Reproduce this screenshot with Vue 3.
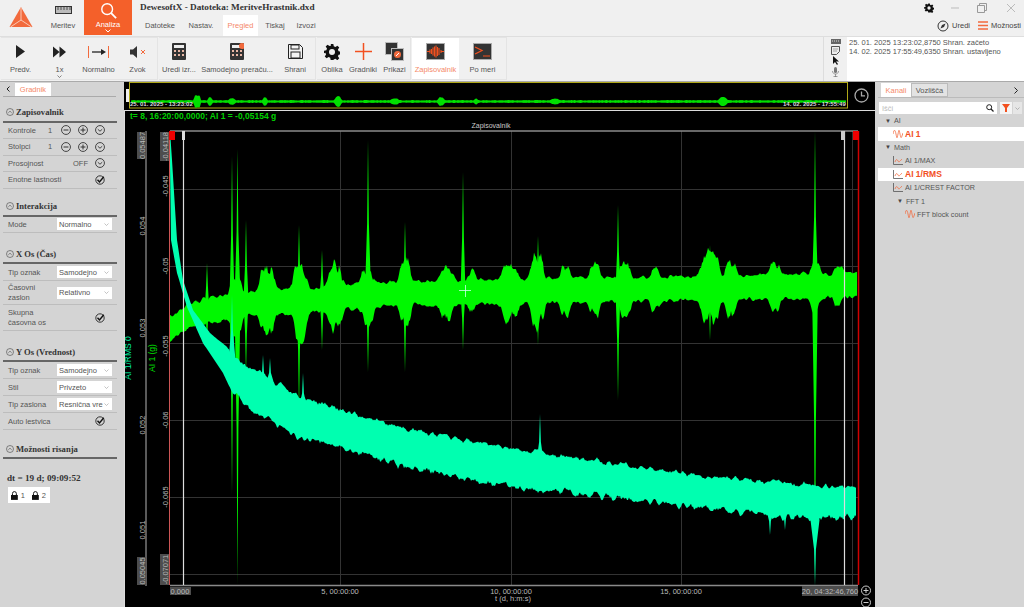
<template>
  <div class="app">
    <header class="top">
      <div class="logo">
        <svg width="24" height="22" viewBox="0 0 24 22">
          <path d="M12 0 L23.500 20 L.5 20 Z" fill="#f26a3d" />
          <path d="M12 1 L12 13 M1.500 20 L12 13 L22.500 20" stroke="#fbc9b5" stroke-width="1" fill="none" />
        </svg>
      </div>
      <div class="mode">
        <svg width="17" height="8" viewBox="0 0 17 8" class="mode-icon"><rect x=".5" y=".5" width="16" height="7" fill="#bbb" stroke="#333" /><path d="M3 1v3M6 1v3M9 1v3M12 1v3M15 1v3" stroke="#333" stroke-width=".8" /></svg>
        <span>Meritev</span>
      </div>
      <div class="mode active">
        <svg width="17" height="17" viewBox="0 0 19 19"><circle cx="8" cy="8" r="6" fill="none" stroke="#fff" stroke-width="1.600" /><path d="M12.500 12.500 L18 18" stroke="#fff" stroke-width="2" /></svg>
        <span>Analiza</span>
        <svg width="6" height="4" viewBox="0 0 6 4" class="caret"><path d="M.5 .5 L3 3 L5.500 .5" fill="none" stroke="#fff" /></svg>
      </div>
      <div class="title-wrap">
        <div class="title">DewesoftX - Datoteka: MeritveHrastnik.dxd</div>
        <nav class="tabs">
          <span class="tab" style="width:38px">Datoteke</span>
          <span class="tab" style="width:40px">Nastav.</span>
          <span class="tab sel" style="width:35px">Pregled</span>
          <span class="tab" style="width:30px">Tiskaj</span>
          <span class="tab" style="width:28px">Izvozi</span>
        </nav>
      </div>
      <div class="win">
        <div class="win-row">
          <svg width="10" height="10" viewBox="0 0 24 24" class="gear"><path fill="#111" d="M10 1h4l.6 3.200 2.200.9 2.700-1.800 2.800 2.800-1.800 2.700.9 2.200 3.200.6v4l-3.200.6-.9 2.200 1.800 2.700-2.800 2.800-2.700-1.800-2.200.9L14 23h-4l-.6-3.200-2.200-.9-2.700 1.800-2.800-2.800 1.800-2.700-.9-2.200L0 14v-4l3.200-.6.9-2.200-1.800-2.700 2.800-2.800 2.700 1.800 2.200-.9z" /><circle cx="12" cy="12" r="4" fill="#f0f0f0" /></svg>
          <svg width="10" height="10" viewBox="0 0 10 10" class="w-min"><path d="M1 5h8" stroke="#bbb" /></svg>
          <svg width="10" height="10" viewBox="0 0 10 10" class="w-max"><path d="M.5 2.500h7v7h-7z M2.500 2.500v-2h7v7h-2" fill="none" stroke="#999" /></svg>
          <svg width="10" height="10" viewBox="0 0 10 10" class="w-close"><path d="M1 1l8 8M9 1l-8 8" stroke="#bbb" /></svg>
        </div>
        <div class="win-row links">
          <svg width="12" height="12" viewBox="0 0 12 12"><circle cx="6" cy="6" r="5" fill="none" stroke="#333" /><path d="M8.500 3.500 L5 5 L3.500 8.500 L7 7 Z" fill="#333" /></svg>
          <span class="lnk">Uredi</span>
          <svg width="10" height="9" viewBox="0 0 10 9" class="burger"><path d="M0 1h10M0 4.500h10M0 8h10" stroke="#f26a3d" stroke-width="1.500" /></svg>
          <span class="lnk">Možnosti</span>
        </div>
      </div>
    </header>

    <section class="toolbar">
      <div class="groups">
        <div v-for="(g, i) in toolGroups" :key="i" class="group">
          <div v-for="b in g" :key="b.label" class="tool" :class="{ on: b.on }" :style="{ width: b.w + 'px' }">
            <div class="tool-icon">
              <svg v-if="b.icon === 'play'" width="9" height="13" viewBox="0 0 9 13"><path d="M0 0 L9 6.500 L0 13Z" fill="#222" /></svg>
              <svg v-else-if="b.icon === 'ff'" width="13" height="12" viewBox="0 0 14 12"><path d="M0 0 L7 6 L0 12Z M7 0 L14 6 L7 12Z" fill="#222" /></svg>
              <svg v-else-if="b.icon === 'norm'" width="21" height="12" viewBox="0 0 21 12"><path d="M.5 0v12M20.500 0v12" stroke="#f26a3d" /><path d="M4 6h11" stroke="#222" stroke-width="1.300" /><path d="M13 3 L18 6 L13 9Z" fill="#222" /></svg>
              <svg v-else-if="b.icon === 'mute'" width="16" height="12" viewBox="0 0 16 12"><path d="M0 3.500h3L7 0v12L3 8.500H0Z" fill="#333" /><path d="M11 4l4 4M15 4l-4 4" stroke="#f26a3d" /></svg>
              <svg v-else-if="b.icon === 'calc' || b.icon === 'calc2'" width="14" height="17" viewBox="0 0 14 17"><rect width="14" height="17" rx="1" fill="#333" /><rect x="2" y="2" width="10" height="3" fill="#eee" /><path d="M2 7h2v2H2zM6 7h2v2H6zM10 7h2v2h-2zM2 11h2v2H2zM6 11h2v2H6zM10 11h2v2h-2z" fill="#e9b7a5" /><circle v-if="b.icon === 'calc2'" cx="12" cy="3" r="3" fill="#f26a3d" /></svg>
              <svg v-else-if="b.icon === 'save'" width="15" height="15" viewBox="0 0 15 15"><path d="M.5 .5h11l3 3v11H.5z" fill="#f3f3f3" stroke="#222" /><rect x="3" y="1" width="8" height="4" fill="none" stroke="#222" /><rect x="3" y="8" width="9" height="6" fill="none" stroke="#222" /></svg>
              <svg v-else-if="b.icon === 'gear'" width="16" height="16" viewBox="0 0 24 24"><path fill="#111" d="M10 0h4l.7 3.500 2.400 1 3-2 2.800 2.800-2 3 1 2.400 3.500.7v4l-3.500.7-1 2.400 2 3-2.800 2.800-3-2-2.400 1L14 24h-4l-.7-3.500-2.400-1-3 2-2.800-2.800 2-3-1-2.400L0 14v-4l3.500-.7 1-2.400-2-3L5.300 1.100l3 2 2.400-1z" /><circle cx="12" cy="12" r="4.500" fill="#f0f0f0" /></svg>
              <svg v-else-if="b.icon === 'plus'" width="17" height="17" viewBox="0 0 17 17"><path d="M8.500 0v17M0 8.500h17" stroke="#f2501f" stroke-width="1.500" /></svg>
              <svg v-else-if="b.icon === 'disp'" width="19" height="19" viewBox="0 0 19 19"><rect x=".5" y=".5" width="12" height="12" fill="#333" stroke="#bbb" /><rect x="6.500" y="6.500" width="12" height="12" fill="#333" stroke="#bbb" /><circle cx="12.500" cy="12.500" r="3.500" fill="#f26a3d" /><path d="M11 14l3-3" stroke="#fff" /></svg>
              <svg v-else-if="b.icon === 'rec'" width="19" height="17" viewBox="0 0 19 17"><rect x=".5" y=".5" width="18" height="16" fill="#333" stroke="#aaa" /><path d="M1 8.500h3M4 6.500v4M5.500 6v5M7 4.500v8M8.500 3.500v10M10 2.500v12M11.500 4v9M13 5v7M15 7v3M15 8.500h3" stroke="#f2501f" stroke-width="1.100" /></svg>
              <svg v-else-if="b.icon === 'term'" width="19" height="17" viewBox="0 0 19 17"><rect x=".5" y=".5" width="18" height="16" fill="#333" stroke="#aaa" /><path d="M2 4 L9 7.500 L2 11" fill="none" stroke="#f2501f" stroke-width="1.300" /><path d="M10 13h7" stroke="#f2501f" /></svg>
            </div>
            <span class="tool-label">{{ b.label }}</span>
            <svg v-if="b.caret" class="tool-caret" width="5" height="3" viewBox="0 0 5 3"><path d="M.5 .5 L2.500 2.500 L4.500 .5" fill="none" stroke="#555" stroke-width=".7" /></svg>
          </div>
        </div>
      </div>
      <div class="side-icons">
        <svg width="10" height="5" viewBox="0 0 10 5"><rect width="10" height="5" fill="#666" /><path d="M1 2h8" stroke="#ddd" stroke-dasharray="1 1" /></svg>
        <svg width="9" height="9" viewBox="0 0 9 9"><path d="M.5 .5h8v5l-3 3h-5z" fill="#eee" stroke="#555" /><path d="M2 3h5M2 5h4" stroke="#777" stroke-width=".6" /></svg>
        <svg width="7" height="9" viewBox="0 0 7 9"><path d="M1 0 L1 8 L3 6 L5 9 L6 8 L4 5.500 L7 5.500Z" fill="#111" /></svg>
        <svg width="7" height="10" viewBox="0 0 7 10"><rect x="2" width="3" height="6" rx="1.500" fill="#777" /><path d="M.5 4c0 4 6 4 6 0M3.500 7v3M1.500 9.500h4" stroke="#777" fill="none" stroke-width=".7" /></svg>
      </div>
      <div class="log">
        <div>25. 01. 2025 13:23:02,8750 Shran. začeto</div>
        <div>14. 02. 2025 17:55:49,6350 Shran. ustavljeno</div>
      </div>
    </section>

    <main class="main">
      <aside class="left">
        <div class="left-tabs">
          <svg width="4" height="6" viewBox="0 0 4 6"><path d="M3.500 .5 L1 3 L3.500 5.500" fill="none" stroke="#222" stroke-width="1" /></svg>
          <span class="left-tab">Gradnik</span>
        </div>
        <div v-for="s in sections" :key="s.title" class="section" :style="{ marginTop: s.mt + 'px' }">
          <div class="sec-head">
            <svg width="8" height="8" viewBox="0 0 8 8"><circle cx="4" cy="4" r="3.500" fill="none" stroke="#444" stroke-width=".6" /><path d="M2.300 4.800 L4 3.200 L5.700 4.800" fill="none" stroke="#444" stroke-width=".6" /></svg>
            <span>{{ s.title }}</span>
          </div>
          <div v-for="r in s.rows" :key="r.label" class="row" :style="{ height: (r.h || 16.500) + 'px' }">
            <span class="row-label" :class="{ wrap: r.wrap }">{{ r.label }}</span>
            <template v-if="r.num">
              <span class="row-num">1</span>
              <svg v-for="k in 3" :key="k" width="10" height="10" viewBox="0 0 9 9" class="circ"><circle cx="4.500" cy="4.500" r="4" fill="none" stroke="#333" stroke-width=".8" /><path v-if="k < 3" d="M2.300 4.500h4.400" stroke="#333" stroke-width=".9" /><path v-if="k === 2" d="M4.500 2.300v4.400" stroke="#333" stroke-width=".9" /><path v-if="k === 3" d="M2.500 3.800 L4.500 5.600 L6.500 3.800" fill="none" stroke="#333" stroke-width=".8" /></svg>
            </template>
            <template v-else-if="r.off">
              <span class="row-off">OFF</span>
              <svg width="10" height="10" viewBox="0 0 9 9" class="circ last"><circle cx="4.500" cy="4.500" r="4" fill="none" stroke="#333" stroke-width=".8" /><path d="M2.500 3.800 L4.500 5.600 L6.500 3.800" fill="none" stroke="#333" stroke-width=".8" /></svg>
            </template>
            <svg v-else-if="r.check" width="10" height="10" viewBox="0 0 10 10" class="check"><circle cx="5" cy="5" r="4.200" fill="none" stroke="#222" stroke-width=".9" /><path d="M2.500 4.800 L4.500 7 L8.800 1.800" fill="none" stroke="#111" stroke-width="1.400" /></svg>
            <span v-else-if="r.sel" class="select">
              <span class="sel-text">{{ r.sel }}</span>
              <svg width="5" height="3" viewBox="0 0 5 3"><path d="M.5 .5 L2.500 2.500 L4.500 .5" fill="none" stroke="#aaa" stroke-width=".7" /></svg>
            </span>
          </div>
        </div>
        <div class="dt">dt = 19 d; 09:09:52</div>
        <div class="locks">
          <template v-for="n in 2" :key="n">
            <svg width="7" height="9" viewBox="0 0 7 9"><path d="M1.500 4V2.500a2 2 0 0 1 4 0V4" fill="none" stroke="#111" /><rect y="4" width="7" height="5" fill="#111" /></svg>
            <span class="lock-n">{{ n }}</span>
          </template>
        </div>
      </aside>

      <div class="center">
        <div class="overview">
          <svg class="strip" width="724" height="27" viewBox="124 82 724 27">
            <rect x="129.500" y="82.500" width="718" height="25.500" fill="#000" stroke="#b0a818" />
            <rect x="126" y="89" width="3" height="13" fill="#eee" />
            <polygon :points="overviewPoints" fill="#00e000" />
            <text x="130" y="106" class="ov-text">25. 01. 2025 - 13:23:02</text>
            <text x="783" y="106" class="ov-text">14. 02. 2025 - 17:55:49</text>
          </svg>
          <div class="clock-box">
            <svg width="15" height="15" viewBox="0 0 15 15"><circle cx="7.500" cy="7.500" r="6.500" fill="none" stroke="#aaa" stroke-width="1.300" /><path d="M7.500 3.500v4.300h3.500" fill="none" stroke="#aaa" stroke-width="1.300" /></svg>
          </div>
        </div>
        <svg class="plot" width="751" height="498" viewBox="124 109 751 498">
          <rect x="124" y="109" width="751" height="498" fill="#000" />
          <path d="M124.500 110V607M124 110.500H875" stroke="#ddd" />
          <text x="130" y="119" class="info">t= 8, 16:20:00,0000; AI 1 = -0,05154 g</text>
          <text x="491" y="128" class="plot-title" text-anchor="middle">Zapisovalnik</text>

          <!-- grid -->
          <path v-for="y in gridY" :key="'y' + y" :d="`M170 ${y}H858`" stroke="#333" />
          <path v-for="x in gridX" :key="'x' + x" :d="`M${x} 131V585`" stroke="#333" />
          <path d="M170 131H858 M146 131V586 M170 585.500H858" stroke="#8a8a8a" fill="none" stroke-width="1.300" />

          <!-- traces -->
          <polygon v-for="(s, i) in greenSpikes" :key="'g' + i" :points="s" fill="#00f800" />
          <polygon :points="greenPoints" fill="#00f800" />
          <polygon v-for="(s, i) in tealSpikes" :key="'t' + i" :points="s" fill="#00ffb0" />
          <polygon :points="tealPoints" fill="#00ffb0" />

          <!-- cursors -->
          <path d="M169.500 131V585" stroke="#c55" />
          <path d="M183.500 131V585 M844.500 131V585" stroke="#ddd" stroke-width="1.200" />
          <path d="M858.500 131V585" stroke="#d00000" stroke-width="1.500" />
          <rect x="169" y="131" width="6" height="9" fill="#f00000" />
          <rect x="853" y="131" width="6" height="9" fill="#f00000" />
          <rect x="182" y="131" width="3" height="9" fill="#ddd" />
          <rect x="841" y="131" width="4" height="9" fill="#ccc" />
          <path d="M459 290.500h12M465.500 285v12" stroke="#cfe" stroke-width=".8" />

          <!-- axis labels -->
          <g v-for="l in yLabels" :key="l.t + l.y" :transform="`rotate(-90 ${l.x} ${l.y})`">
            <rect v-if="l.box" :x="l.x - l.box / 2" :y="l.y - 4.500" :width="l.box" height="9" fill="#4d4d4d" />
            <text :x="l.x" :y="l.y + 3" text-anchor="middle" class="tick">{{ l.t }}</text>
          </g>
          <text transform="rotate(-90 131 358)" x="131" y="358" text-anchor="middle" class="axis-teal">AI 1/RMS 0</text>
          <text transform="rotate(-90 155 358)" x="155" y="358" text-anchor="middle" class="axis-green">AI 1 (g)</text>

          <rect x="170" y="587" width="21" height="8" fill="#4d4d4d" />
          <text x="180" y="593.500" text-anchor="middle" class="tick">0,000</text>
          <text x="340" y="593.500" text-anchor="middle" class="tick">5, 00:00:00</text>
          <text x="511" y="593.500" text-anchor="middle" class="tick">10, 00:00:00</text>
          <text x="681" y="593.500" text-anchor="middle" class="tick">15, 00:00:00</text>
          <rect x="802" y="586" width="56" height="10" fill="#4d4d4d" />
          <text x="830" y="593.500" text-anchor="middle" class="tick">20, 04:32:46,760</text>
          <text x="513" y="601" text-anchor="middle" class="tick">t (d, h:m:s)</text>

          <circle cx="866" cy="590.500" r="4.500" fill="none" stroke="#ccc" />
          <path d="M863.500 590.500h5M866 588v5" stroke="#ccc" />
          <circle cx="866" cy="602.500" r="4.500" fill="none" stroke="#ccc" />
          <path d="M863.500 602.500h5" stroke="#ccc" />
        </svg>
      </div>

      <aside class="right">
        <div class="right-tabs">
          <span class="rt on">Kanali</span>
          <span class="rt off">Vozlišča</span>
          <svg width="4" height="7" viewBox="0 0 4 7" class="rt-chev"><path d="M.5 .5 L3.500 3.500 L.5 6.500" fill="none" stroke="#222" /></svg>
        </div>
        <div class="search-row">
          <div class="search">
            <span class="search-ph">Išči</span>
            <svg width="8" height="8" viewBox="0 0 8 8"><circle cx="3.200" cy="3.200" r="2.500" fill="none" stroke="#222" /><path d="M5 5 L7.500 7.500" stroke="#222" stroke-width="1.200" /></svg>
          </div>
          <div class="funnel"><svg width="8" height="8" viewBox="0 0 8 8"><path d="M0 0h8L5 4v4H3V4Z" fill="#f2501f" /></svg></div>
          <div class="fdrop"><svg width="5" height="3" viewBox="0 0 5 3"><path d="M.5 .5 L2.500 2.500 L4.500 .5" fill="none" stroke="#999" stroke-width=".7" /></svg></div>
        </div>
        <div class="tree">
          <div v-for="n in tree" :key="n.label" class="node" :class="{ picked: n.picked }" :style="{ paddingLeft: n.pad + 'px' }">
            <span v-if="n.kind === 'open'" class="arrow">▼</span>
            <svg v-else-if="n.kind === 'wave'" width="10" height="8" viewBox="0 0 10 8" class="node-icon"><path d="M0 4 C1 -1 2 -1 3 4 S4 9 5 4 S6 -1 7 4 S8 9 10 3" fill="none" stroke="#f26a3d" stroke-width=".8" /></svg>
            <svg v-else width="10" height="9" viewBox="0 0 10 9" class="node-icon"><path d="M.5 0v8.500H10" fill="none" stroke="#555" stroke-width=".8" /><path d="M2 6 C3 3 4 3 5 5 S7 5 9 3" fill="none" stroke="#f26a3d" stroke-width=".8" /></svg>
            <span>{{ n.label }}</span>
          </div>
        </div>
      </aside>
    </main>
  </div>
</template>

<script setup>
import { computed } from 'vue'

const toolGroups = [
  [
    { label: 'Predv.', w: 39, icon: 'play' },
    { label: '1x', w: 39, icon: 'ff', caret: true },
    { label: 'Normalno', w: 39, icon: 'norm' },
    { label: 'Zvok', w: 39, icon: 'mute' },
  ],
  [
    { label: 'Uredi izr...', w: 40, icon: 'calc' },
    { label: 'Samodejno preraču...', w: 76, icon: 'calc2' },
    { label: 'Shrani', w: 40, icon: 'save' },
  ],
  [
    { label: 'Oblika', w: 30, icon: 'gear' },
    { label: 'Gradniki', w: 32, icon: 'plus' },
    { label: 'Prikazi', w: 31, icon: 'disp' },
  ],
  [
    { label: 'Zapisovalnik', w: 47, icon: 'rec', on: true },
    { label: 'Po meri', w: 47, icon: 'term' },
  ],
]

const sections = [
  {
    title: 'Zapisovalnik',
    mt: 6.5,
    rows: [
      { label: 'Kontrole', num: true },
      { label: 'Stolpci', num: true },
      { label: 'Prosojnost', off: true },
      { label: 'Enotne lastnosti', check: true },
    ],
  },
  { title: 'Interakcija', mt: 9, rows: [{ label: 'Mode', sel: 'Normalno', h: 16.5 }] },
  {
    title: 'X Os (Čas)',
    mt: 12,
    rows: [
      { label: 'Tip oznak', sel: 'Samodejno', h: 17 },
      { label: 'Časovni zaslon', sel: 'Relativno', h: 24, wrap: true },
      { label: 'Skupna časovna os', check: true, h: 26, wrap: true },
    ],
  },
  {
    title: 'Y Os (Vrednost)',
    mt: 12,
    rows: [
      { label: 'Tip oznak', sel: 'Samodejno', h: 17 },
      { label: 'Stil', sel: 'Privzeto', h: 17 },
      { label: 'Tip zaslona', sel: 'Resnična vre', h: 17 },
      { label: 'Auto lestvica', check: true, h: 17 },
    ],
  },
  { title: 'Možnosti risanja', mt: 10, rows: [] },
]

const tree = [
  { label: 'AI', kind: 'open', pad: 7 },
  { label: 'AI 1', kind: 'wave', pad: 15, picked: true },
  { label: 'Math', kind: 'open', pad: 7 },
  { label: 'AI 1/MAX', kind: 'line', pad: 15 },
  { label: 'AI 1/RMS', kind: 'line', pad: 15, picked: true },
  { label: 'AI 1/CREST FACTOR', kind: 'line', pad: 15 },
  { label: 'FFT 1', kind: 'open', pad: 19 },
  { label: 'FFT block count', kind: 'wave', pad: 27 },
]

const gridY = [189.5, 266.5, 343.5, 420.5, 497.5, 574.5]
const gridX = [340.5, 511.5, 681.5, 852.5]

const yLabels = [
  { t: '0.05487', x: 141.5, y: 145.5, box: 27 },
  { t: '0.05045', x: 141.5, y: 571, box: 28 },
  { t: '-0.04118', x: 164.5, y: 146.5, box: 29 },
  { t: '-0.07071', x: 164.5, y: 569.5, box: 31 },
  { t: '0.054', x: 141.5, y: 226 },
  { t: '0.053', x: 141.5, y: 328 },
  { t: '0.052', x: 141.5, y: 425 },
  { t: '0.051', x: 141.5, y: 530 },
  { t: '-0.045', x: 164.5, y: 186 },
  { t: '-0.05', x: 164.5, y: 266 },
  { t: '-0.055', x: 164.5, y: 346 },
  { t: '-0.06', x: 164.5, y: 420 },
  { t: '-0.065', x: 164.5, y: 497 },
]

// small seeded generator so the traces stay the same between runs
let seed = 1234
function rnd() {
  seed = (seed * 16807) % 2147483647
  return seed / 2147483647
}

function interp(keys, x) {
  for (let i = 1; i < keys.length; i++) {
    if (x <= keys[i][0]) {
      const [x0, y0] = keys[i - 1]
      const [x1, y1] = keys[i]
      return y0 + ((y1 - y0) * (x - x0)) / (x1 - x0)
    }
  }
  return keys[keys.length - 1][1]
}

// flat topped bumps, the envelope has steep flanks
function bump(list, x) {
  let v = 0
  for (const [c, w, a] of list) v = Math.max(v, a * Math.exp(-(((x - c) / w) ** 4)))
  return v
}

// noise that changes over a few pixels instead of on each one
function smoothNoise(len, span) {
  const raw = Array.from({ length: len + span }, () => rnd())
  const out = []
  for (let i = 0; i < len; i++) {
    let s = 0
    for (let k = 0; k < span; k++) s += raw[i + k]
    out.push((s / span - 0.5) * 2)
  }
  return out
}

function toPoints(top, bot) {
  return top.concat(bot.reverse()).map((p) => p[0].toFixed(1) + ',' + p[1].toFixed(1)).join(' ')
}

function spike(x, top, bot, w, mid) {
  const s1 = top + (mid - top) * 0.55
  const s2 = bot - (bot - mid) * 0.55
  return `${x},${top} ${x + 0.9},${s1} ${x + w},${mid} ${x + 0.9},${s2} ${x},${bot} ${x - 0.9},${s2} ${x - w},${mid} ${x - 0.9},${s1}`
}

const greenCenter = [[170, 329], [190, 315], [215, 309], [260, 302], [300, 301], [400, 293], [600, 290], [857, 285]]
const greenBumps = [
  [236, 6, 16], [267, 8, 20], [300, 8, 22], [335, 8, 20], [367, 7, 14], [405, 6, 20], [447, 7, 13], [472, 5, 7],
  [510, 9, 14], [537, 7, 22], [565, 5, 12], [595, 6, 11], [625, 6, 14], [655, 5, 8], [710, 9, 24], [731, 6, 16],
  [775, 6, 10], [815, 5, 12], [838, 5, 6],
]

const greenPoints = computed(() => {
  const top = []
  const bot = []
  const n1 = smoothNoise(700, 3)
  const n2 = smoothNoise(700, 3)
  for (let x = 170; x <= 857; x++) {
    const c = interp(greenCenter, x)
    const b = bump(greenBumps, x)
    const h = 12 + b
    const j = 1.5 + b * 0.25
    top.push([x, c - h - n1[x - 170] * j * 2])
    bot.push([x, c + h + n2[x - 170] * j * 2])
  }
  return toPoints(top, bot)
})

const greenSpikes = [
  spike(207, 263, 345, 2, 305),
  spike(232, 156, 494, 2.5, 300),
  spike(237.5, 149, 585, 3, 300),
  spike(246, 220, 375, 2.5, 300),
  spike(299, 225, 415, 3, 297),
  spike(322, 250, 350, 2.5, 297),
  spike(368, 140, 372, 3, 292),
  spike(405, 222, 372, 2.5, 292),
  spike(463, 172, 350, 2.5, 292),
  spike(538, 236, 345, 2.5, 290),
  spike(618, 205, 400, 2.5, 290),
  spike(710, 245, 340, 2.5, 288),
  spike(815, 131, 585, 3, 287),
]

const tealTop = [[170, 130], [172, 160], [177, 240], [183, 280], [193, 310], [210, 333], [227, 347], [240, 363], [277, 383], [300, 397], [400, 427], [500, 447], [600, 462], [700, 476], [800, 484], [857, 488]]
const tealBot = [[170, 165], [171, 240], [177, 273], [187, 307], [203, 343], [223, 373], [232, 392], [250, 410], [300, 437], [400, 465], [500, 486], [600, 496], [700, 508], [800, 518], [857, 518]]

const tealPoints = computed(() => {
  const top = []
  const bot = []
  const n1 = smoothNoise(700, 4)
  const n2 = smoothNoise(700, 4)
  for (let x = 170; x <= 856; x++) {
    const n = x < 230 ? 0.3 : 5
    top.push([x, interp(tealTop, x) - n1[x - 170] * n])
    bot.push([x, interp(tealBot, x) + n2[x - 170] * n * 1.3])
  }
  return toPoints(top, bot)
})

const tealSpikes = [
  spike(232, 295, 400, 3.5, 360),
  spike(263, 355, 410, 3.5, 385),
  spike(270, 358, 410, 4.5, 385),
  spike(303, 373, 440, 4.5, 410),
  spike(540, 414, 490, 4, 465),
  spike(815, 480, 586, 4.5, 520),
  spike(770, 485, 535, 3.5, 510),
  spike(785, 485, 530, 3, 510),
]

const overviewBumps = [[196, 2, 5], [199, 1.5, 5], [210, 2, 3], [232, 3, 2], [265, 2, 3], [338, 3, 4], [395, 4, 1.5], [441, 3, 3], [476, 2, 1.5], [555, 4, 1.5], [723, 4, 3]]

const overviewPoints = computed(() => {
  const top = []
  const bot = []
  for (let x = 131; x <= 846; x++) {
    const h = 1 + bump(overviewBumps, x) + rnd() * 0.5
    top.push([x, 101.5 - h])
    bot.push([x, 101.5 + h])
  }
  return toPoints(top, bot)
})
</script>

<style scoped>
.app {
  width: 1024px;
  height: 607px;
  overflow: hidden;
  background: #f0f0f0;
  display: flex;
  flex-direction: column;
  font-family: "Liberation Sans", Arial, sans-serif;
  font-size: 7.500px;
  color: #555;
}

.top {
  height: 36px;
  display: flex;
  flex: none;
  box-sizing: border-box;
}

.logo {
  width: 42px;
  display: flex;
  align-items: center;
  justify-content: center;
}

.mode {
  width: 42px;
  display: flex;
  flex-direction: column;
  align-items: center;
  padding-top: 6px;
  box-sizing: border-box;
}

.mode-icon {
  margin: 0 0 7px;
}

.mode.active {
  width: 48px;
  background: #f4602a;
  color: #fff;
  padding-top: 2px;
  height: 35px;
}

.mode.active span {
  margin-top: 1px;
}

.caret {
  margin-top: 0;
}

.title-wrap {
  margin-left: 8px;
  flex: 1;
  display: flex;
  flex-direction: column;
}

.title {
  font-family: "Liberation Serif", serif;
  font-weight: 700;
  font-size: 9.200px;
  color: #333;
  padding-top: 2px;
  height: 13px;
}

.tabs {
  display: flex;
  margin-left: 1px;
  flex: 1;
}

.tab {
  display: flex;
  align-items: center;
  justify-content: center;
  margin-right: 2px;
}

.tab.sel {
  background: #fff;
  color: #f58a6a;
}

.win {
  display: flex;
  flex-direction: column;
  width: 106px;
  padding-right: 3px;
  box-sizing: border-box;
}

.win-row {
  display: flex;
  align-items: center;
  height: 15px;
  justify-content: flex-end;
}

.gear { margin-right: 16px; }
.w-min { margin-right: 17px; }
.w-max { margin-right: 19px; }
.w-close { margin-right: 5px; }

.links {
  height: 21px;
  color: #444;
}

.lnk { margin-left: 3px; }
.burger { margin-left: 8px; }

.toolbar {
  height: 45px;
  display: flex;
  flex: none;
  box-sizing: border-box;
  border-top: 1px solid #dedede;
}

.groups {
  display: flex;
  gap: 1px;
  padding: 0 0 0 1px;
  width: 823px;
  box-sizing: border-box;
}

.group {
  display: flex;
  height: 43px;
  box-sizing: border-box;
  border: 1px solid #e4e4e4;
  border-left: 0;
  flex: none;
}

.tool {
  display: flex;
  flex-direction: column;
  align-items: center;
  position: relative;
  flex: none;
}

.tool.on {
  background: #fff;
  color: #f58a6a;
}

.tool-icon {
  height: 27px;
  display: flex;
  align-items: center;
  justify-content: center;
}

.tool-label {
  white-space: nowrap;
}

.tool-caret {
  position: absolute;
  bottom: 1px;
}

.side-icons {
  width: 24px;
  display: flex;
  flex-direction: column;
  align-items: center;
  gap: 1.500px;
  padding-top: 2px;
  border-left: 1px solid #ddd;
  box-sizing: border-box;
}

.log {
  flex: 1;
  background: #fff;
  padding: 1px 2px;
  line-height: 9px;
  white-space: nowrap;
  overflow: hidden;
}

.main {
  flex: 1;
  display: flex;
  min-height: 0;
  border-top: 1px solid #aaa;
  height: 525px;
}

.left {
  width: 124px;
  flex: none;
  background: #d4d4d4;
  box-sizing: border-box;
  padding: 0 7px 0 3px;
}

.left-tabs {
  height: 14px;
  display: flex;
  align-items: flex-end;
  gap: 5px;
  padding-left: 3px;
  border-bottom: 1px solid #aaa;
  margin-right: 1px;
}

.left-tabs svg { margin-bottom: 4px; }

.left-tab {
  width: 36px;
  height: 13px;
  background: #fff;
  color: #f58a6a;
  display: flex;
  align-items: center;
  justify-content: center;
}

.sec-head {
  height: 19px;
  display: flex;
  align-items: center;
  gap: 2px;
  padding-left: 3px;
  border-bottom: 2px solid #666;
  box-sizing: border-box;
  font-family: "Liberation Serif", serif;
  font-weight: 700;
  font-size: 8.600px;
  color: #333;
}

.row {
  display: flex;
  align-items: center;
  border-bottom: 1px solid #bdbdbd;
  padding-left: 5px;
  box-sizing: border-box;
  position: relative;
}

.row-label {
  white-space: nowrap;
}

.row-label.wrap {
  white-space: normal;
  width: 50px;
  line-height: 10px;
}

.row-num {
  position: absolute;
  left: 45px;
}

.circ {
  position: absolute;
  left: 58px;
}

.circ:nth-of-type(2) { left: 75px; }
.circ:nth-of-type(3) { left: 92px; }
.circ.last { left: 92px; }

.row-off {
  position: absolute;
  left: 70px;
}

.check {
  position: absolute;
  left: 92px;
}

.select {
  position: absolute;
  left: 54px;
  width: 55px;
  height: 12px;
  background: #fff;
  display: flex;
  align-items: center;
  justify-content: space-between;
  padding: 0 3px 0 2px;
  box-sizing: border-box;
}

.sel-text {
  white-space: nowrap;
}

.dt {
  margin: 14px 0 0 4px;
  font-family: "Liberation Serif", serif;
  font-weight: 700;
  font-size: 9.200px;
  color: #333;
}

.locks {
  margin: 4px 0 0 5px;
  width: 42px;
  height: 16px;
  background: #fff;
  display: flex;
  align-items: center;
  gap: 3px;
  padding-left: 3px;
  box-sizing: border-box;
}

.lock-n { margin-right: 4px; }

.center {
  width: 751px;
  flex: none;
  background: #000;
  display: flex;
  flex-direction: column;
}

.overview {
  display: flex;
  height: 27px;
  flex: none;
}

.strip, .plot {
  display: block;
  flex: none;
}

.clock-box {
  flex: 1;
  display: flex;
  align-items: center;
  justify-content: center;
}

.ov-text {
  font-size: 6px;
  font-weight: 700;
  fill: #ddd;
}

.info {
  font-size: 8.500px;
  font-weight: 700;
  fill: #00d000;
}

.plot-title {
  font-size: 7px;
  fill: #ccc;
}

.tick {
  font-size: 7.500px;
  fill: #bbb;
}

.axis-teal {
  font-size: 8.500px;
  fill: #00f0a0;
}

.axis-green {
  font-size: 8.500px;
  fill: #00e000;
}

.right {
  flex: 1;
  background: #d4d4d4;
  padding: 1px 0 0 3px;
  min-width: 0;
}

.right-tabs {
  height: 14px;
  display: flex;
  align-items: stretch;
  padding-left: 3px;
  border-bottom: 1px solid #bbb;
  position: relative;
}

.rt {
  display: flex;
  align-items: center;
  justify-content: center;
}

.rt.on {
  width: 30px;
  background: #fff;
  color: #f58a6a;
}

.rt.off {
  width: 37px;
  background: #e3e3e3;
  border: 1px solid #bbb;
  box-sizing: border-box;
}

.rt-chev {
  position: absolute;
  right: 6px;
  top: 4px;
}

.search-row {
  display: flex;
  align-items: stretch;
  height: 12px;
  margin-top: 4px;
  padding-left: 1px;
}

.search {
  width: 118px;
  background: #fff;
  display: flex;
  align-items: center;
  justify-content: space-between;
  padding: 0 3px;
  box-sizing: border-box;
}

.search-ph { color: #bbb; }

.funnel {
  width: 12px;
  margin-left: 3px;
  background: #f4f4f4;
  display: flex;
  align-items: center;
  justify-content: center;
}

.fdrop {
  width: 9px;
  margin-left: 1px;
  background: #e6e6e6;
  display: flex;
  align-items: center;
  justify-content: center;
}

.tree {
  margin-top: 0;
}

.node {
  height: 13.400px;
  display: flex;
  align-items: center;
  gap: 2px;
  font-size: 7.200px;
}

.node.picked {
  background: #fff;
  color: #f2501f;
  font-weight: 700;
  font-size: 8.500px;
}

.arrow {
  font-size: 6px;
  color: #444;
  margin-right: 1px;
}
</style>

<style>
html, body {
  margin: 0;
  background: #000;
  overflow: hidden;
}
</style>
